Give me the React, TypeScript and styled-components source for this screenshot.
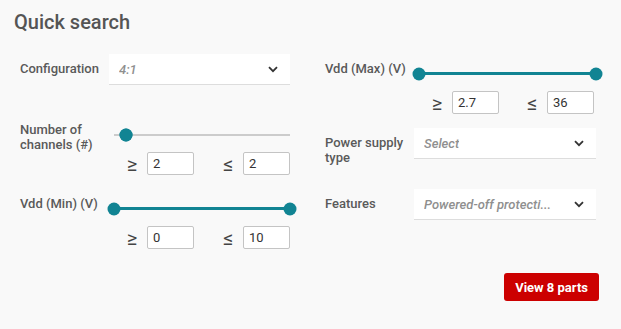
import React, { FC } from 'react';
import styled, { createGlobalStyle } from 'styled-components';

const GlobalStyle = createGlobalStyle`
  html, body {
    margin: 0;
    padding: 0;
    background: #f9f9f9;
  }
  body {
    font-family: Roboto, 'Liberation Sans', Arial, sans-serif;
  }
`;

const Page = styled.div`
  width: 621px;
  height: 329px;
  box-sizing: border-box;
  padding: 10px 22px 0 14px;
  background: #f9f9f9;
`;

const Title = styled.h2`
  margin: 0;
  font-size: 20px;
  line-height: 24px;
  font-weight: 500;
  color: #555;
`;

const Columns = styled.div`
  display: grid;
  grid-template-columns: 270px 271px;
  column-gap: 35px;
  margin-top: 20px;
  padding-left: 6px;
`;

const Column = styled.div`
  display: flex;
  flex-direction: column;
  gap: 14px;
`;

const Field = styled.div<{ $labelWidth: number }>`
  display: grid;
  grid-template-columns: ${({ $labelWidth }) => $labelWidth}px 1fr;
  align-items: start;
`;

const Label = styled.div`
  padding-top: 7px;
  font-size: 13px;
  line-height: 15px;
  font-weight: 500;
  color: #5a5a5a;
`;

const SelectBox = styled.div`
  display: flex;
  align-items: center;
  justify-content: space-between;
  height: 31px;
  box-sizing: border-box;
  padding: 0 12px 0 10px;
  margin-bottom: 16px;
  background: #fff;
  border-bottom: 1px solid #ddd;
`;

const SelectValue = styled.span`
  font-size: 13px;
  font-style: italic;
  font-weight: 500;
  color: #8f8f8f;
  white-space: nowrap;
  overflow: hidden;
  text-overflow: ellipsis;
`;

const Chevron = styled.svg`
  flex: none;
  margin-left: 8px;
`;

const SliderBox = styled.div`
  display: flex;
  align-items: center;
  height: 13px;
  margin-top: 13px;
  padding-left: 5px;
`;

const Track = styled.div`
  position: relative;
  flex: 1;
  height: 2px;
  background: #cccccc;
`;

const Range = styled.div`
  position: absolute;
  top: -0.5px;
  height: 3px;
  background: #118493;
`;

const Thumb = styled.div`
  position: absolute;
  top: 50%;
  width: 13px;
  height: 13px;
  border-radius: 50%;
  background: #118493;
  transform: translate(-50%, -50%);
`;

const BoundsRow = styled.div<{ $inset: number }>`
  display: flex;
  justify-content: space-between;
  margin-top: 11px;
  padding-left: 18px;
  padding-right: ${({ $inset }) => $inset}px;
`;

const Bound = styled.div`
  display: flex;
  align-items: center;
`;

const Symbol = styled.span`
  width: 20px;
  font-size: 20px;
  line-height: 22px;
  color: #444;
`;

const NumberInput = styled.input`
  width: 47px;
  height: 23px;
  box-sizing: border-box;
  padding: 0 5px;
  border: 1px solid #c4c4c4;
  border-radius: 2px;
  background: #fff;
  font-family: Roboto, 'Liberation Sans', Arial, sans-serif;
  font-size: 13px;
  color: #333;
  outline: none;
`;

const Footer = styled.div`
  display: flex;
  justify-content: flex-end;
  margin-top: 24px;
`;

const ViewButton = styled.button`
  height: 28px;
  padding: 0 11px;
  border: none;
  border-radius: 3px;
  background: #cc0000;
  color: #fff;
  font-family: Roboto, 'Liberation Sans', Arial, sans-serif;
  font-size: 13px;
  font-weight: 700;
  cursor: pointer;
`;

interface SelectFieldProps {
  label: string;
  value: string;
  labelWidth: number;
}

const SelectField: FC<SelectFieldProps> = ({ label, value, labelWidth }) => (
  <Field $labelWidth={labelWidth}>
    <Label>{label}</Label>
    <SelectBox>
      <SelectValue>{value}</SelectValue>
      <Chevron width="10" height="7" viewBox="0 0 10 7">
        <path d="M1 1.2 L5 5.2 L9 1.2" fill="none" stroke="#333" strokeWidth="1.8" />
      </Chevron>
    </SelectBox>
  </Field>
);

interface RangeFieldProps {
  label: string;
  labelWidth: number;
  min: number;
  max: number;
  low: number;
  high: number;
  lowText: string;
  highText: string;
  inset?: number;
}

const RangeField: FC<RangeFieldProps> = ({
  label, labelWidth, min, max, low, high, lowText, highText, inset = 0,
}) => {
  const lowPct = ((low - min) / (max - min)) * 100;
  const highPct = ((high - min) / (max - min)) * 100;

  return (
    <Field $labelWidth={labelWidth}>
      <Label>{label}</Label>
      <div>
        <SliderBox>
          <Track>
            <Range style={{ left: `${lowPct}%`, right: `${100 - highPct}%` }} />
            <Thumb style={{ left: `${lowPct}%` }} />
            <Thumb style={{ left: `${highPct}%` }} />
          </Track>
        </SliderBox>
        <BoundsRow $inset={inset}>
          <Bound>
            <Symbol>≥</Symbol>
            <NumberInput defaultValue={lowText} />
          </Bound>
          <Bound>
            <Symbol>≤</Symbol>
            <NumberInput defaultValue={highText} />
          </Bound>
        </BoundsRow>
      </div>
    </Field>
  );
};

const App: FC = () => (
  <>
    <GlobalStyle />
    <Page>
      <Title>Quick search</Title>
      <Columns>
        <Column>
          <SelectField label="Configuration" value="4:1" labelWidth={89} />
          <RangeField
            label="Number of channels (#)"
            labelWidth={89}
            min={1}
            max={16}
            low={2}
            high={2}
            lowText="2"
            highText="2"
          />
          <RangeField
            label="Vdd (Min) (V)"
            labelWidth={89}
            min={0}
            max={10}
            low={0}
            high={10}
            lowText="0"
            highText="10"
          />
        </Column>
        <Column>
          <RangeField
            label="Vdd (Max) (V)"
            labelWidth={89}
            min={2.7}
            max={36}
            low={2.7}
            high={36}
            lowText="2.7"
            highText="36"
            inset={2}
          />
          <SelectField label="Power supply type" value="Select" labelWidth={89} />
          <SelectField label="Features" value="Powered-off protecti..." labelWidth={89} />
        </Column>
      </Columns>
      <Footer>
        <ViewButton type="button">View 8 parts</ViewButton>
      </Footer>
    </Page>
  </>
);

export default App;
